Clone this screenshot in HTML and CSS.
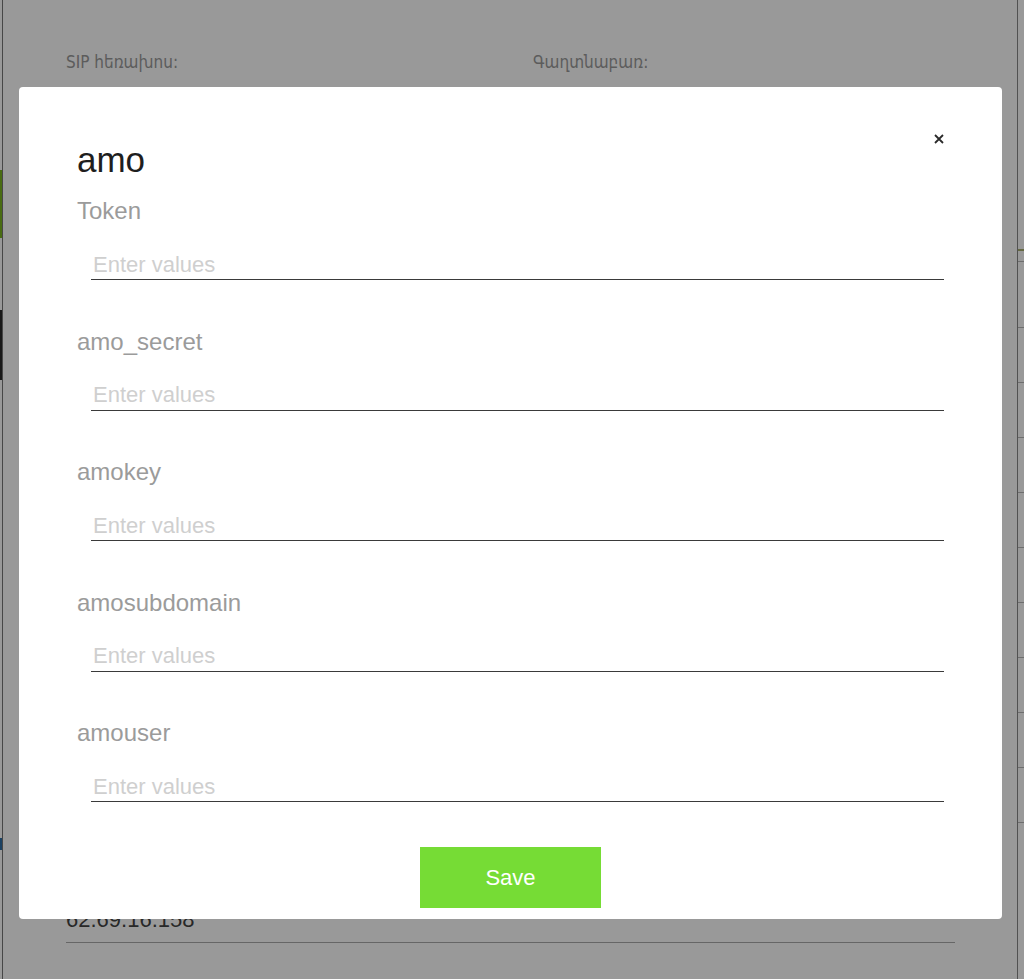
FILE: index.html
```html
<!DOCTYPE html>
<html lang="hy">
<head>
<meta charset="utf-8">
<title>amo</title>
<link rel="stylesheet" href="styles.css">
</head>
<body>
<div class="page">
  <div class="edge-left">
    <div class="edge-seg seg-green"></div>
    <div class="edge-seg seg-dark"></div>
    <div class="edge-seg seg-blue"></div>
  </div>
  <main class="content">
    <div class="cred-row">
      <span class="cred-label">SIP հեռախոս:</span>
      <span class="cred-label">Գաղտնաբառ:</span>
    </div>
    <div class="spacer"></div>
    <div class="ip-field">62.69.16.158</div>
  </main>
  <div class="edge-right">
    <div class="row-line r1"></div>
    <div class="row-line r2"></div>
    <div class="row-line r3"></div>
    <div class="row-line"></div>
    <div class="row-line"></div>
    <div class="row-line"></div>
    <div class="row-line"></div>
    <div class="row-line"></div>
    <div class="row-line"></div>
    <div class="row-line"></div>
    <div class="row-line"></div>
    <div class="row-line"></div>
  </div>
</div>

<div class="overlay">
  <div class="modal">
    <button class="close" aria-label="Close">
      <svg width="10" height="10" viewBox="0 0 10 10"><path d="M1 1 L9 9 M9 1 L1 9" stroke="#2a2a2a" stroke-width="1.8" fill="none"/></svg>
    </button>
    <h2 class="modal-title">amo</h2>
    <div class="field">
      <label class="field-label">Token</label>
      <input class="field-input" type="text" placeholder="Enter values">
    </div>
    <div class="field">
      <label class="field-label">amo_secret</label>
      <input class="field-input" type="text" placeholder="Enter values">
    </div>
    <div class="field">
      <label class="field-label">amokey</label>
      <input class="field-input" type="text" placeholder="Enter values">
    </div>
    <div class="field">
      <label class="field-label">amosubdomain</label>
      <input class="field-input" type="text" placeholder="Enter values">
    </div>
    <div class="field">
      <label class="field-label">amouser</label>
      <input class="field-input" type="text" placeholder="Enter values">
    </div>
    <button class="save">Save</button>
  </div>
</div>
</body>
</html>
```

FILE: styles.css
```css
* { box-sizing: border-box; }

html, body {
  margin: 0;
  height: 100%;
  background: #fff;
  font-family: "Liberation Sans", Arial, sans-serif;
}

.page {
  display: flex;
  height: 979px;
  overflow: hidden;
}

.edge-left {
  width: 3px;
  border-right: 1px solid #777;
  display: flex;
  flex-direction: column;
}
.edge-seg { width: 2px; }
.seg-green { margin-top: 170px; height: 68px; background: #7bb51e; }
.seg-dark { margin-top: 72px; height: 70px; background: #2a2a2a; }
.seg-blue { margin-top: 458px; height: 12px; background: #2d6da3; }

.content {
  flex: 1;
  display: flex;
  flex-direction: column;
  padding: 52px 0 36px 63px;
}

.cred-row {
  display: grid;
  grid-template-columns: 467px 1fr;
}
.cred-label {
  font-family: "DejaVu Sans Condensed", "DejaVu Sans", sans-serif;
  font-stretch: condensed;
  font-size: 17px;
  line-height: 20px;
  color: #9a9a9a;
}

.spacer { flex: 1; }

.ip-field {
  width: 889px;
  font-size: 22px;
  line-height: 26px;
  color: #444;
  padding-bottom: 9px;
  border-bottom: 1px solid #aaa;
}

.edge-right {
  width: 7px;
  border-left: 1px solid #888;
  display: flex;
  flex-direction: column;
}
.row-line {
  height: 55px;
  border-bottom: 1px solid #b8b8b8;
}
.r1 { height: 251px; border-bottom: 2px solid #a8b070; }
.r2 { height: 11px; }
.r3 { height: 66px; }

.overlay {
  position: fixed;
  inset: 0;
  background: rgba(0, 0, 0, 0.4);
  display: flex;
  align-items: flex-start;
  padding: 87px 0 0 19px;
}

.modal {
  position: relative;
  width: 983px;
  height: 832px;
  background: #fff;
  border-radius: 4px;
  padding: 53px 58px 0 58px;
  display: flex;
  flex-direction: column;
}

.close {
  position: absolute;
  top: 47px;
  right: 58px;
  width: 10px;
  height: 10px;
  padding: 0;
  border: none;
  background: none;
  display: flex;
}

.modal-title {
  margin: 0;
  font-size: 35px;
  line-height: 40px;
  font-weight: normal;
  color: #1e1e1e;
}

.field {
  display: flex;
  flex-direction: column;
  align-items: flex-start;
  margin-top: 47.5px;
}
.modal-title + .field { margin-top: 17px; }

.field-label {
  font-size: 24px;
  line-height: 28px;
  color: #9b9b9b;
}

.field-input {
  margin: 23px 0 0 14px;
  width: 853px;
  height: 32px;
  padding: 2px 2px 0;
  border: none;
  border-bottom: 1px solid #3a3a3a;
  outline: none;
  font-family: "Liberation Sans", Arial, sans-serif;
  font-size: 22px;
  color: #333;
  background: transparent;
}
.field-input::placeholder { color: #cfcfcf; }

.save {
  align-self: center;
  margin-top: 45px;
  width: 181px;
  height: 61px;
  border: none;
  background: #76dc35;
  color: #fff;
  font-family: "Liberation Sans", Arial, sans-serif;
  font-size: 22px;
}
```
